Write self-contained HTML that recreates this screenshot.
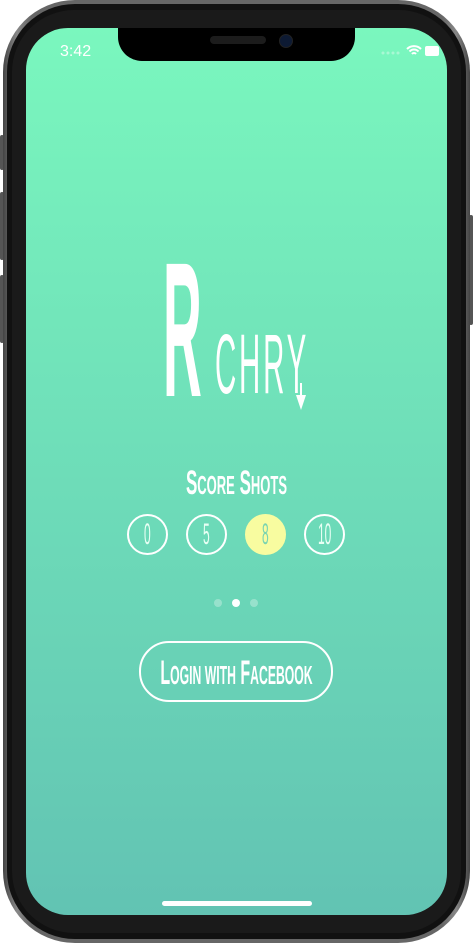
<!DOCTYPE html>
<html><head><style>
body{margin:0;width:473px;height:943px;background:#fff;position:relative;overflow:hidden;font-family:"Liberation Sans",sans-serif}
.b1{position:absolute;left:3px;top:0;width:467px;height:943px;border-radius:72px;background:linear-gradient(90deg,#444,#888 3%,#666 6%,#666 94%,#888 97%,#444)}
.b2{position:absolute;left:7px;top:4px;width:459px;height:935px;border-radius:68px;background:#111}
.b3{position:absolute;left:12px;top:10px;width:449px;height:923px;border-radius:62px;background:#1a1a1a}
.scr{position:absolute;left:26px;top:28px;width:421px;height:887px;border-radius:42px;background:linear-gradient(180deg,#7af7be,#62c3b3);overflow:hidden;color:#fff}
.btn{position:absolute;background:#555;width:4px;border-radius:2px}
.notch{position:absolute;left:92px;top:-2px;width:237px;height:35px;background:#000;border-radius:0 0 24px 24px}
.c{position:absolute;text-align:center;white-space:nowrap}
.circ{position:absolute;top:486px;width:37px;height:37px;border:2px solid #fff;border-radius:50%;font-size:30px;line-height:37px;text-align:center}
.circ span{display:inline-block;transform:scaleX(.4);color:#e8fff4}
</style></head><body>
<div class="btn" style="left:0;top:135px;height:35px"></div>
<div class="btn" style="left:0;top:192px;height:68px"></div>
<div class="btn" style="left:0;top:275px;height:68px"></div>
<div class="btn" style="left:469px;top:215px;height:110px"></div>
<div class="b1"></div><div class="b2"></div><div class="b3"></div>
<div class="scr">
<div class="notch"><div style="position:absolute;left:92px;top:10px;width:56px;height:8px;border-radius:4px;background:#1c1c1c"></div><div style="position:absolute;left:161px;top:8px;width:12px;height:12px;border-radius:50%;background:#0d1a33;border:1px solid #222"></div></div>
<div class="c" style="left:34px;top:15px;font-size:16px">3:42</div>
<svg style="position:absolute;left:355px;top:16px" width="60" height="14"><g fill="#fff" opacity=".35"><circle cx="2" cy="9" r="1.5"/><circle cx="7" cy="9" r="1.5"/><circle cx="12" cy="9" r="1.5"/><circle cx="17" cy="9" r="1.5"/></g><path d="M26 5a10 10 0 0 1 14 0M28.5 7.5a6 6 0 0 1 9 0M31 10a2.5 2.5 0 0 1 4 0" stroke="#fff" stroke-width="2" fill="none"/><rect x="44" y="2" width="14" height="10" rx="2" fill="#fff"/></svg>
<div class="c" style="left:137px;top:206px;font-size:192px;line-height:192px;transform:scaleX(.28);transform-origin:left top;font-weight:bold">R</div>
<div class="c" style="left:189px;top:294px;font-size:84px;line-height:84px;letter-spacing:8px;transform:scaleX(.35);transform-origin:left top">CHRY</div>
<svg style="position:absolute;left:265px;top:355px" width="20" height="30"><path d="M10 0v18" stroke="#fff" stroke-width="2"/><path d="M5 12l5 15 5-15z" fill="#fff"/></svg>
<div class="c" style="left:0;width:421px;top:436px;font-size:34px;font-weight:bold;transform:scaleX(.5);">S<span style="font-size:26px">CORE</span> S<span style="font-size:26px">HOTS</span></div>
<div class="circ" style="left:101px"><span>0</span></div>
<div class="circ" style="left:160px"><span>5</span></div>
<div class="circ" style="left:219px;background:#f8fca0;border-color:#f8fca0"><span style="color:#7ad4b0">8</span></div>
<div class="circ" style="left:278px"><span>10</span></div>
<div style="position:absolute;left:188px;top:571px;width:8px;height:8px;border-radius:50%;background:rgba(255,255,255,.3)"></div>
<div style="position:absolute;left:206px;top:571px;width:8px;height:8px;border-radius:50%;background:#fff"></div>
<div style="position:absolute;left:224px;top:571px;width:8px;height:8px;border-radius:50%;background:rgba(255,255,255,.3)"></div>
<div style="position:absolute;left:113px;top:613px;width:190px;height:57px;border:2px solid #fff;border-radius:30px"></div>
<div class="c" style="left:0;width:421px;top:627px;font-size:34px;line-height:36px;font-weight:bold;transform:scaleX(.47)">L<span style="font-size:26px">OGIN WITH</span> F<span style="font-size:26px">ACEBOOK</span></div>
<div style="position:absolute;left:136px;top:873px;width:150px;height:5px;border-radius:3px;background:#fff"></div>
</div>
</body></html>
